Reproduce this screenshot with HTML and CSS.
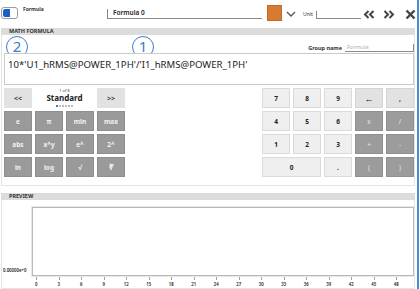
FILE: index.html
```html
<!DOCTYPE html>
<html lang="en">
<head>
  <meta charset="utf-8">
  <title>Formula editor</title>
  <link rel="stylesheet" href="styles.css">
</head>
<body>
<div class="app">
  <div class="topbar">
    <div class="toggle-group">
      <div class="toggle"><span class="toggle-on"></span></div>
      <span class="toggle-label">Formula</span>
    </div>
    <div class="name-field">Formula 0</div>
    <div class="swatch"></div>
    <svg class="chevron" width="10" height="6" viewBox="0 0 10 6"><polyline points="1,1 5,5 9,1" fill="none" stroke="#555" stroke-width="1.3"/></svg>
    <span class="unit-label">Unit</span>
    <div class="unit-field"></div>
    <svg class="nav nav-prev" width="12" height="9" viewBox="0 0 12 9"><polyline points="5.5,1 2,4.5 5.5,8" fill="none" stroke="#444" stroke-width="2"/><polyline points="10.5,1 7,4.5 10.5,8" fill="none" stroke="#444" stroke-width="2"/></svg>
    <svg class="nav nav-next" width="12" height="9" viewBox="0 0 12 9"><polyline points="1.5,1 5,4.5 1.5,8" fill="none" stroke="#444" stroke-width="2"/><polyline points="6.5,1 10,4.5 6.5,8" fill="none" stroke="#444" stroke-width="2"/></svg>
    <svg class="nav nav-close" width="11" height="11" viewBox="0 0 11 11"><line x1="1.5" y1="1.5" x2="9.5" y2="9.5" stroke="#444" stroke-width="2.4"/><line x1="9.5" y1="1.5" x2="1.5" y2="9.5" stroke="#444" stroke-width="2.4"/></svg>
  </div>

  <div class="panel">
    <div class="panel-head">MATH FORMULA</div>
    <div class="panel-body math-body">
      <div class="annot-row">
        <span class="badge badge-2">2</span>
        <span class="badge badge-1">1</span>
        <div class="group-name">
          <span class="group-label">Group name</span>
          <div class="group-field">Formula</div>
        </div>
      </div>
      <div class="formula-box">10*'U1_hRMS@POWER_1PH'/'I1_hRMS@POWER_1PH'</div>
      <div class="keypads">
        <div class="pad pad-func">
          <div class="btn btn-nav">&lt;&lt;</div>
          <div class="pager">
            <span class="pager-count">1 of 6</span>
            <span class="pager-title">Standard</span>
            <span class="pager-dots"><i class="on"></i><i></i><i></i><i></i><i></i><i></i></span>
          </div>
          <div class="btn btn-nav">&gt;&gt;</div>
          <div class="btn btn-dark">e</div>
          <div class="btn btn-dark">π</div>
          <div class="btn btn-dark">min</div>
          <div class="btn btn-dark">max</div>
          <div class="btn btn-dark">abs</div>
          <div class="btn btn-dark">x^y</div>
          <div class="btn btn-dark">e^</div>
          <div class="btn btn-dark">2^</div>
          <div class="btn btn-dark">ln</div>
          <div class="btn btn-dark">log</div>
          <div class="btn btn-dark">√</div>
          <div class="btn btn-dark">∛</div>
        </div>
        <div class="pad pad-num">
          <div class="btn btn-num">7</div>
          <div class="btn btn-num">8</div>
          <div class="btn btn-num">9</div>
          <div class="btn btn-light btn-arrow">←</div>
          <div class="btn btn-light">,</div>
          <div class="btn btn-num">4</div>
          <div class="btn btn-num">5</div>
          <div class="btn btn-num">6</div>
          <div class="btn btn-op">x</div>
          <div class="btn btn-op">/</div>
          <div class="btn btn-num">1</div>
          <div class="btn btn-num">2</div>
          <div class="btn btn-num">3</div>
          <div class="btn btn-op">+</div>
          <div class="btn btn-op">-</div>
          <div class="btn btn-num btn-wide">0</div>
          <div class="btn btn-num">.</div>
          <div class="btn btn-op">(</div>
          <div class="btn btn-op">)</div>
        </div>
      </div>
    </div>
  </div>

  <div class="panel panel-preview">
    <div class="panel-head">PREVIEW</div>
    <div class="panel-body preview-body">
      <div class="chart-row">
        <span class="y-label">0.00000e+0</span>
        <div class="plot"></div>
      </div>
      <div class="x-axis">
        <span>0</span><span>3</span><span>6</span><span>9</span><span>12</span><span>15</span>
        <span>18</span><span>21</span><span>24</span><span>27</span><span>30</span><span>33</span>
        <span>36</span><span>39</span><span>42</span><span>45</span><span>48</span>
      </div>
    </div>
  </div>
</div>
</body>
</html>
```

FILE: styles.css
```css
body {
  margin: 0;
  background: #fff;
  font-family: "Noto Sans", "Open Sans", sans-serif;
  color: #333;
}

.app {
  width: 419px;
  height: 289px;
  box-sizing: border-box;
  border-right: 2px solid #4a8bd6;
  overflow: hidden;
}

/* Top bar */
.topbar {
  display: flex;
  align-items: flex-start;
  height: 28px;
}

.toggle-group {
  display: flex;
  align-items: flex-start;
  gap: 5px;
  width: 107px;
  padding: 7px 0 0 1px;
  box-sizing: border-box;
}

.toggle {
  width: 17px;
  height: 12px;
  box-sizing: border-box;
  border: 1px solid #9c9c9c;
  border-radius: 3px;
  background: #fff;
  padding: 1px;
}

.toggle-on {
  display: block;
  width: 7px;
  height: 100%;
  background: #1c5fc2;
  border-radius: 2px 0 0 2px;
}

.toggle-label {
  font-size: 5px;
  font-weight: 700;
  line-height: 6px;
  margin-top: -1px;
  color: #333;
}

.name-field {
  width: 155px;
  box-sizing: border-box;
  margin-top: 9px;
  padding-left: 5px;
  border-bottom: 1px solid #8a8a8a;
  border-left: 1px solid #8a8a8a;
  height: 10px;
  font-size: 6.5px;
  font-weight: 600;
  line-height: 8px;
  color: #222;
}

.swatch {
  width: 15px;
  height: 16px;
  margin: 5px 0 0 5px;
  background: #d87a30;
  box-shadow: inset 0 0 0 1px #c46a24;
}

.chevron {
  margin: 11px 0 0 4px;
}

.unit-label {
  margin: 11px 0 0 7px;
  font-size: 5px;
  line-height: 6px;
  color: #333;
}

.unit-field {
  width: 44px;
  height: 7px;
  margin: 11px 0 0 3px;
  border-bottom: 1px solid #8a8a8a;
  border-left: 1px solid #8a8a8a;
}

.nav {
  margin-top: 10px;
}

.nav-prev {
  margin-left: 2px;
}

.nav-next {
  margin-left: 8px;
}

.nav-close {
  margin: 9px 0 0 10px;
}

/* Panels */
.panel {
  margin: 0 2px 0 1px;
}

.panel-preview {
  margin-top: 7px;
}

.panel-head {
  height: 7px;
  background: #dcdcdc;
  padding-left: 8px;
  font-size: 5.5px;
  font-weight: 700;
  line-height: 7px;
  color: #333;
}

.panel-body {
  border: 1px solid #e4e4e4;
  border-top: 0;
}

.math-body {
  padding: 0 0 8px 2px;
}

.annot-row {
  position: relative;
  height: 18px;
  display: flex;
  justify-content: flex-end;
  align-items: flex-end;
}

.badge {
  position: absolute;
  top: 1px;
  width: 20px;
  height: 20px;
  border: 1.4px solid #3b7ec8;
  border-radius: 50%;
  color: #3b7ec8;
  font-size: 15px;
  line-height: 18px;
  text-align: center;
}

.badge-2 {
  left: 2px;
}

.badge-1 {
  left: 128px;
}

.group-name {
  display: flex;
  align-items: flex-end;
  gap: 3px;
  padding-bottom: 1px;
}

.group-label {
  font-size: 5.5px;
  font-weight: 700;
  line-height: 7px;
  color: #333;
}

.group-field {
  width: 69px;
  box-sizing: border-box;
  padding-left: 2px;
  border-bottom: 1px solid #8a8a8a;
  border-right: 1px solid #8a8a8a;
  font-size: 5.5px;
  line-height: 7px;
  color: #aaa;
}

.formula-box {
  position: relative;
  z-index: 1;
  height: 32px;
  box-sizing: border-box;
  border: 1px solid #cacaca;
  background: #fff;
  padding: 5px 3px;
  font-size: 9.6px;
  line-height: 12px;
  color: #222;
  white-space: nowrap;
}

.keypads {
  display: flex;
  justify-content: space-between;
  margin-top: 3px;
}

.pad {
  display: grid;
  grid-auto-rows: 20px;
  gap: 3px;
}

.pad-func {
  grid-template-columns: repeat(4, 28px);
}

.pad-num {
  grid-template-columns: repeat(5, 28px);
}

.btn {
  display: flex;
  align-items: center;
  justify-content: center;
  box-sizing: border-box;
  font-size: 6.5px;
  font-weight: 700;
}

.btn-nav {
  background: #e2e2e2;
  color: #333;
  font-size: 7px;
}

.btn-dark {
  background: #9a9a9a;
  border: 1px solid #8e8e8e;
  color: #f2f2f2;
}

.btn-num {
  background: #efefef;
  border: 1px solid #dadada;
  color: #222;
}

.btn-light {
  background: #e2e2e2;
  border: 1px solid #d4d4d4;
  color: #222;
}

.btn-arrow {
  font-size: 9px;
}

.btn-op {
  background: #9c9c9c;
  border: 1px solid #909090;
  color: #e6e6e6;
  font-weight: 400;
}

.btn-wide {
  grid-column: span 2;
}

.pager {
  grid-column: span 2;
  display: flex;
  flex-direction: column;
  align-items: center;
}

.pager-count {
  font-size: 4px;
  line-height: 5px;
  color: #333;
}

.pager-title {
  font-size: 8px;
  font-weight: 700;
  line-height: 10px;
  color: #222;
}

.pager-dots {
  display: flex;
  gap: 1px;
  margin-top: 2px;
}

.pager-dots i {
  width: 2px;
  height: 2px;
  background: #bcbcbc;
}

.pager-dots i.on {
  background: #3b7ec8;
}

/* Preview */
.preview-body {
  padding: 7px 0 0 1px;
  height: 81px;
}

.chart-row {
  display: flex;
  align-items: flex-end;
}

.y-label {
  width: 29px;
  font-size: 4.3px;
  font-weight: 600;
  line-height: 5px;
  color: #222;
  margin-bottom: 3px;
}

.plot {
  flex: 1;
  height: 69px;
  box-sizing: border-box;
  border: 1px solid #b9b9b9;
  box-shadow: 0 0 0 1px #e8e8e8;
}

.x-axis {
  display: flex;
  margin-left: 22px;
}

.x-axis span {
  width: 22.5px;
  padding-top: 6px;
  text-align: center;
  font-size: 4.3px;
  font-weight: 600;
  line-height: 5px;
  color: #222;
  position: relative;
}

.x-axis span::before {
  content: "";
  position: absolute;
  top: 1px;
  left: 50%;
  width: 1px;
  height: 3px;
  background: #a0a0a0;
}
```
